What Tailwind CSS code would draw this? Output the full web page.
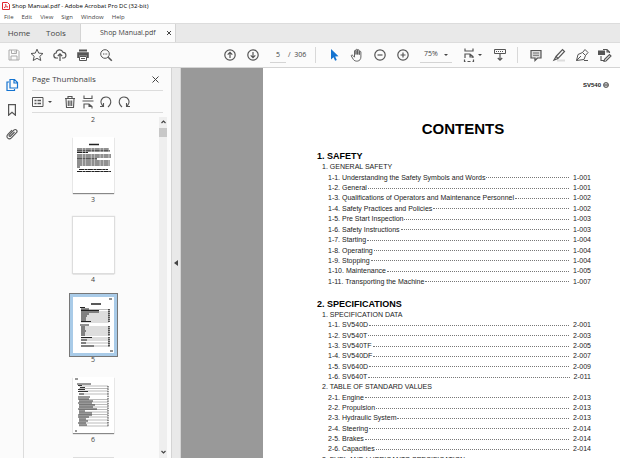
<!DOCTYPE html>
<html lang="en">
<head>
    <meta charset="UTF-8">
    <meta name="viewport" content="width=device-width, initial-scale=1.0">
    <title>Shop Manual.pdf - Adobe Acrobat Pro DC (32-bit)</title>
    <script src="https://cdn.jsdelivr.net/npm/@tailwindcss/browser@4"></script>
</head>
<body class="h-screen flex flex-col overflow-hidden bg-white font-['Open_Sans','Noto_Sans',sans-serif] text-[#444]">
    <!-- Title bar -->
    <header class="h-3 shrink-0 flex items-center gap-0.5 pl-0.5 text-[6px] text-black">
        <svg class="size-2" viewBox="0 0 8 8" fill="none" stroke="#e0282e"><path d="M.5.5h5l2 2v5h-7z"/><path d="M2 6c2-1 2-4 1.600-4S4 5 6 5C4 4.500 3 5 2 6z" stroke-width=".7"/></svg>
        <h1>Shop Manual.pdf - Adobe Acrobat Pro DC (32-bit)</h1>
    </header>
    <nav class="h-[11px] shrink-0 flex items-center gap-2 pl-1 text-[6px]">
        <button>File</button><button>Edit</button><button>View</button><button>Sign</button><button>Window</button><button>Help</button>
    </nav>

    <!-- Tabs -->
    <div class="h-5 shrink-0 flex bg-[#e9e9e9] border-y border-[#dcdcdc] text-[8px]">
        <button class="w-[38px]">Home</button>
        <button class="w-[36px]">Tools</button>
        <div class="ml-1.5 w-24 flex items-center justify-between pl-[19px] pr-1 bg-[#fbfbfb] border-x border-[#d4d4d4]">
            <span class="text-[7px]">Shop Manual.pdf</span>
            <button aria-label="Close tab"><svg class="size-1" viewBox="0 0 4 4" stroke="#444"><path d="M0 0l4 4M4 0L0 4"/></svg></button>
        </div>
    </div>

    <!-- Toolbar -->
    <div class="h-[25px] shrink-0 flex items-center bg-[#fbfbfb] border-b border-[#d4d4d4] pl-0.5 pr-1 text-[7px]">
        <button class="w-[23px] flex justify-center" aria-label="Save"><svg class="size-3.5" viewBox="0 0 14 14" fill="none" stroke="#aaa"><path d="M2 2h8.500L12 3.500V12H2zM4.500 2v3.500h5V2M4 12V8h6v4M8 3v1.500"/></svg></button>
        <button class="w-[23px] flex justify-center" aria-label="Star"><svg class="size-3.5" viewBox="0 0 14 14" fill="none" stroke="#555"><path d="M7 1.200l1.700 3.900 4.300.4-3.200 2.800 1 4.200L7 10.300l-3.800 2.200 1-4.200L1 5.500l4.300-.4z"/></svg></button>
        <button class="w-[23px] flex justify-center" aria-label="Upload"><svg class="size-3.5" viewBox="0 0 14 14" fill="none" stroke="#555"><path d="M5 10H3.500a2.500 2.500 0 0 1-.3-5C3.300 1.500 8.500.5 10 4.400c3.500-.2 4 5.300.7 5.600H9M7 13V6M4.800 8L7 5.800 9.200 8" stroke-width="1.200"/></svg></button>
        <button class="w-[23px] flex justify-center" aria-label="Print"><svg class="size-3.5" viewBox="0 0 14 14" fill="#555"><path d="M3 1.500h8v2H3zM1.200 4.300h11.600V10H11V7.700H3V10H1.200z"/><path d="M3.500 8.500h7v4h-7zM5 10.500h4" fill="#fff" stroke="#555"/></svg></button>
        <button class="w-[23px] flex justify-center" aria-label="Find"><svg class="size-3.5" viewBox="0 0 14 14" fill="none" stroke="#555"><circle cx="6" cy="6" r="4.300"/><path d="M9.200 9.200l3.600 3.500" stroke-width="1.600"/><path d="M4 6h1m.6 0h1m.6 0h1"/></svg></button>

        <button class="ml-auto w-[23px] flex justify-center" aria-label="Previous page"><svg class="size-3.5" viewBox="0 0 14 14" fill="none" stroke="#555" stroke-width="1.200"><circle cx="7" cy="7" r="5.200"/><path d="M7 10V4.500M4.700 6.600L7 4.300l2.300 2.300"/></svg></button>
        <button class="w-[23px] flex justify-center" aria-label="Next page"><svg class="size-3.5" viewBox="0 0 14 14" fill="none" stroke="#555" stroke-width="1.200"><circle cx="7" cy="7" r="5.200"/><path d="M7 4v5.500M4.700 7.400L7 9.700l2.300-2.300"/></svg></button>
        <input class="ml-1.5 w-4 h-4 text-center border-b border-[#d4d4d4]" value="5" aria-label="Page number">
        <span class="ml-0.5 w-[27px] whitespace-pre">/  306</span>
        <span class="h-4 w-px bg-[#d8d8d8]"></span>
        <button class="ml-1.5 w-[23px] flex justify-center" aria-label="Select"><svg class="size-3.5" viewBox="0 0 14 14" fill="#1473d0"><path d="M4 1v10.500l2.500-2.300 1.600 3.600 1.700-.8-1.600-3.500 3.300-.2z"/></svg></button>
        <button class="w-[23px] flex justify-center" aria-label="Pan"><svg class="size-3.5" viewBox="0 0 14 14" fill="none" stroke="#555" stroke-width=".9"><path d="M4.500 7.500V3c0-1 1.500-1 1.500 0v3.500V2c0-1 1.700-1 1.700 0v4.500V2.500c0-1 1.600-1 1.600 0v4.200V4c0-1 1.600-1 1.600 0v5c0 5-6 5-7.500 2.500L1.300 8C1 6.800 2.500 6.800 3 7.600l1.500 1.600V7"/></svg></button>
        <button class="w-[23px] flex justify-center" aria-label="Zoom out"><svg class="size-3.5" viewBox="0 0 14 14" fill="none" stroke="#555" stroke-width="1.200"><circle cx="7" cy="7" r="5.200"/><path d="M4.500 7h5"/></svg></button>
        <button class="w-[23px] flex justify-center" aria-label="Zoom in"><svg class="size-3.5" viewBox="0 0 14 14" fill="none" stroke="#555" stroke-width="1.200"><circle cx="7" cy="7" r="5.200"/><path d="M4.500 7h5M7 4.500v5"/></svg></button>
        <button class="ml-1.5 w-8 h-4 flex items-center justify-between px-1 border-b border-[#d4d4d4]">75%<svg class="w-1 h-0.5" viewBox="0 0 4 2" fill="#444"><path d="M0 0h4L2 2z"/></svg></button>
        <button class="ml-2.5 w-5 flex items-center justify-between" aria-label="Fit page"><svg class="size-3.5" viewBox="0 0 14 14" fill="none" stroke="#555" stroke-width="1.200"><path d="M3 .5V3h8V.5M3.500 13.500h-1v-2M3 10V6h5l3 2.500V10M11.500 11.500v2h-1M5.500 13.500h3M8 6v3h3"/></svg><svg class="w-1 h-0.5" viewBox="0 0 4 2" fill="#444"><path d="M0 0h4L2 2z"/></svg></button>
        <button class="ml-1.5 w-[23px] flex justify-center" aria-label="Scrolling"><svg class="size-3.5" viewBox="0 0 14 14" fill="none" stroke="#555"><path d="M1.500 1.500h11v4h-11z"/><path d="M3 3.500h8" stroke-dasharray="1 1"/><path d="M7 6v6M4.800 10L7 12.200 9.200 10" stroke-width="1.200"/></svg></button>
        <span class="ml-1.5 h-4 w-px bg-[#d8d8d8]"></span>
        <button class="ml-1.5 w-[23px] flex justify-center" aria-label="Comment"><svg class="size-3.5" viewBox="0 0 14 14" fill="#ddd" stroke="#555" stroke-width="1.200"><path d="M2 2.500h10V10H8.500L6 12.500V10H2z"/><path d="M4 5h6M4 7.300h6" stroke-width=".8"/></svg></button>
        <button class="w-[23px] flex justify-center" aria-label="Highlight"><svg class="size-3.5" viewBox="0 0 14 14" fill="none" stroke="#555" stroke-width="1.200"><path d="M5 12.500h8" stroke="#ddd" stroke-width="2"/><path d="M4 8.500L10.500 1.500l2 2L6 10.500zM4 8.500L2 12l4-1.500"/></svg></button>
        <button class="w-[23px] flex justify-center" aria-label="Sign"><svg class="size-3.5" viewBox="0 0 14 14" fill="none" stroke="#555"><path d="M1.500 12.500L3 6.500l4.500-2 3 3-1.500 4zM1.500 12.500L6 8M7.500 4.500l2.500-3 3 3-2.500 3M9 12.500h4"/></svg></button>
        <button class="w-[23px] flex justify-center" aria-label="Stamp"><svg class="size-3.5" viewBox="0 0 14 14" fill="none" stroke="#555" stroke-width="1.100"><path d="M3 8v4.500h3M5 1.500h4l2.500 2.500v1M9 1.500V4h2.500M6.500 11.500l5-5 1.500 1.500-5 5-2 .3z"/><path d="M.5 3h6v3.500h-6z" fill="#555"/></svg></button>
    </div>

    <main class="flex-1 min-h-0 flex">
        <!-- Navigation rail -->
        <aside class="w-6 shrink-0 flex flex-col items-center gap-3 pt-2.5 bg-[#fbfbfb] border-r border-[#dcdcdc]">
            <button aria-label="Page thumbnails"><svg class="size-3.5" viewBox="0 0 14 14" fill="none" stroke="#1473d0" stroke-width="1.200"><path d="M5 1.500h4.500l3 3V10H5zM9 1.500V5h3.500M4 4H2v8.500h7.500V11"/></svg></button>
            <button aria-label="Bookmarks"><svg class="w-3 h-3" viewBox="0 0 12 12" fill="none" stroke="#555" stroke-width="1.200"><path d="M2.600.6h6.800v10.600L6 8.200l-3.400 3z"/></svg></button>
            <button aria-label="Attachments"><svg class="w-3 h-3" viewBox="0 0 12 12" fill="none" stroke="#555" stroke-width="1.100"><path d="M8.500 4L4.600 8c-1 1-2.200-.2-1.200-1.200l4.400-4.600c2-1.800 4.400.5 2.600 2.500l-5 5.200c-2.600 2.500-6-.7-3.500-3.500L6 2.200"/></svg></button>
        </aside>

        <!-- Page thumbnails -->
        <section class="w-[147px] shrink-0 flex flex-col bg-[#fbfbfb] pl-2">
            <div class="mr-2 h-[23px] flex items-center justify-between pr-1 border-b border-[#dcdcdc]">
                <h2 class="text-[8px]">Page Thumbnails</h2>
                <button aria-label="Close panel"><svg class="size-[7px]" viewBox="0 0 7 7" stroke="#444"><path d="M.5.5l6 6M6.500.5l-6 6"/></svg></button>
            </div>
            <div class="mr-2 h-[22px] flex items-center gap-1 border-b border-[#dcdcdc]">
                <button class="w-[23px] flex items-center gap-1" aria-label="Options"><svg class="w-3 h-2.5" viewBox="0 0 12 10" fill="none" stroke="#555"><path d="M.5.5h10.500v9H.5z"/><path d="M2.500 3.500h2m1 0h3.500M2.500 6.500h2m1 0h3.500" stroke-width="1.400"/></svg><svg class="w-1 h-0.5" viewBox="0 0 4 2" fill="#444"><path d="M0 0h4L2 2z"/></svg></button>
                <button class="w-[18px] flex justify-end" aria-label="Delete"><svg class="size-3.5" viewBox="0 0 14 14" fill="none" stroke="#555" stroke-width="1.100"><path d="M2 3.500h10M5 3V1.500h4V3M3 4l.5 8.500h7L11 4M5.300 5.500v5.500M7 5.500v5.500M8.700 5.500v5.500"/></svg></button>
                <button aria-label="Insert"><svg class="size-3.5" viewBox="0 0 14 14" fill="none" stroke="#555" stroke-width="1.100"><path d="M3 .5v3h8v-3M1.500 6h11M3 13.500V9h5l3 2.500v2M8 9v2.500h3"/></svg></button>
                <button aria-label="Rotate left"><svg class="size-3.5" viewBox="0 0 14 14" fill="none" stroke="#555" stroke-width="1.100"><path d="M4 11C0 7 2.500 2 7 2s7 5.500 2 10M1 11.500h3.500V8"/></svg></button>
                <button aria-label="Rotate right"><svg class="size-3.5" viewBox="0 0 14 14" fill="none" stroke="#555" stroke-width="1.100"><path d="M10 11c4-4 1.500-9-3-9S0 7.500 5 12M13 11.500H9.500V8"/></svg></button>
            </div>
            <div class="flex-1 min-h-0 flex">
                <div class="flex-1 overflow-hidden flex flex-col items-center gap-2.5 pr-[5px] text-[7px] leading-[14px] text-center">
                    <span>2</span>
                    <figure><svg class="w-[41px] h-14 bg-white shadow-[0_1px_1px_#888]" viewBox="0 0 41 56" stroke="#222"><path d="M16 7.500h10" stroke-width="1.500"/><path d="M4 12h32M4 13.800h33M4 15.500h11M4 18h34M4 20h34M4 21.800h20M4 24h33M4 26h33M4 28h33M4 30h3M6 32.500h29M4 34.500h34" stroke-width="1.200" stroke-dasharray="5 .5 3 .4"/></svg><figcaption>3</figcaption></figure>
                    <figure><svg class="w-[41px] h-14 bg-white shadow-[0_0_1px_1px_#ddd,0_1px_1px_#888]" viewBox="0 0 41 56"></svg><figcaption>4</figcaption></figure>
                    <figure><svg class="w-[41px] h-14 bg-white outline-1 outline-offset-3 outline-[#777] shadow-[0_0_0_3px_#a9cbe8]" viewBox="0 0 41 56" stroke="#222"><path d="M18 7h10" stroke-width="1.500"/><path d="M36 2h3M37 54h3M7 10.500h5M7 28h9"/><path d="M8 12.500h28M8 15h28M8 17h28M8 19h28M8 21h28M8 23h28M8 25h28M8 30h28M8 32h28M8 34h28M8 36h28M8 38h28M8 41h28M8 43h28M8 46h28M8 49h28" stroke="#bbb"/><path d="M8 12h8M8 13.500h18M8 15h18M8 17h8M8 19h6M8 21h5M8 23h5M8 24.500h10M8 30h4M8 32h4M8 34h5M8 36h4M8 38h4M8 40.500h11M8 43h6M8 46h5M8 49h13"/><path d="M36 12v13M36 29v10M36 40v10" stroke-width="1.500" stroke-dasharray="1.500 .5"/></svg><figcaption>5</figcaption></figure>
                    <figure><svg class="w-[41px] h-14 bg-white shadow-[0_1px_1px_#888]" viewBox="0 0 41 56" stroke="#333"><path d="M2 2h3M2 54h2M4 7h14M5 20h12"/><path d="M6 9h29M6 11.500h29M6 14h29M6 17h29M6 22.500h29M6 25h29M6 27.500h29M6 30h29M6 32.500h29M6 35h29M6 37.500h29M6 40h29M6 43h29M6 46h29M6 49h29" stroke="#bbb"/><path d="M5 8.500h4M7 10.500h5M5 12.500h7M5 14.500h10M6 17h5M5 22h11M6 24h14M5 26h14M6 28h16M6 30h14M5 32h19M6 34h6M6 36h13M5 38h14M5 40h11M6 42h7M6 44h9M5 46h8M6 48h8"/><path d="M35 9v41" stroke-dasharray="1.500 .9"/></svg><figcaption>6</figcaption></figure>
                    <div class="w-[41px] h-14 shrink-0 bg-white border border-[#ddd]"></div>
                </div>
                <div class="w-2 mt-1 mr-1 bg-[#efefef] flex flex-col items-center justify-between pt-[3px] pb-1">
                    <svg class="w-[5px] h-1" viewBox="0 0 5 4" fill="none" stroke="#444" stroke-width="1.200"><path d="M.5 3l2-2 2 2"/></svg>
                    <span class="w-2 h-[9px] mt-1 mb-auto bg-[#c8c8c8]"></span>
                    <svg class="w-[5px] h-1" viewBox="0 0 5 4" fill="none" stroke="#444" stroke-width="1.200"><path d="M.5 1l2 2 2-2"/></svg>
                </div>
            </div>
        </section>
        <button class="w-2.5 shrink-0 flex items-center justify-center bg-[#e9e9e9] border-x border-[#d4d4d4]" aria-label="Collapse panel"><svg class="w-1 h-1.5" viewBox="0 0 4 6" fill="#444"><path d="M4 0v6L0 3z"/></svg></button>

        <!-- Document -->
        <div class="w-[82px] shrink-0 bg-[#999]"></div>
        <article class="flex-1 min-w-0 overflow-hidden bg-white pt-3 pl-[54px] pr-[11px] font-['Liberation_Sans',Arial,sans-serif] text-[#222]">
            <div class="flex items-center justify-end gap-0.5 h-2.5 text-[6px] font-bold">SV540 <svg class="size-1.5" viewBox="0 0 6 6" fill="none" stroke="#333" stroke-width=".8"><circle cx="3" cy="3" r="2.500"/><path d="M1 2.200h4M1 3.800h4"/></svg></div>
            <h1 class="mt-[27px] text-center text-[15px] leading-6 font-bold text-black">CONTENTS</h1>
            <div id="toc" class="mt-2.5 mr-[18px] flex flex-col gap-3"></div>
        </article>
    </main>

    <script>
        // Headings have no page number
        var contents = [
            { title: '1. SAFETY', height: 'h-[125px]', rows: [
                ['1. GENERAL SAFETY'],
                ['1-1. Understanding the Safety Symbols and Words', '1-001'],
                ['1-2. General', '1-001'],
                ['1-3. Qualifications of Operators and Maintenance Personnel', '1-002'],
                ['1-4. Safety Practices and Policies', '1-002'],
                ['1-5. Pre Start Inspection', '1-003'],
                ['1-6. Safety Instructions', '1-003'],
                ['1-7. Starting', '1-004'],
                ['1-8. Operating', '1-004'],
                ['1-9. Stopping', '1-004'],
                ['1-10. Maintenance', '1-005'],
                ['1-11. Transporting the Machine', '1-007']
            ] },
            { title: '2. SPECIFICATIONS', height: 'h-[155px]', rows: [
                ['1. SPECIFICATION DATA'],
                ['1-1. SV540D', '2-001'],
                ['1-2. SV540T', '2-003'],
                ['1-3. SV540TF', '2-005'],
                ['1-4. SV540DF', '2-007'],
                ['1-5. SV640D', '2-009'],
                ['1-6. SV640T', '2-011'],
                ['2. TABLE OF STANDARD VALUES'],
                ['2-1. Engine', '2-013'],
                ['2-2. Propulsion', '2-013'],
                ['2-3. Hydraulic System', '2-013'],
                ['2-4. Steering', '2-014'],
                ['2-5. Brakes', '2-014'],
                ['2-6. Capacities', '2-014'],
                ['3. FUEL AND LUBRICANTS SPECIFICATION']
            ] }
        ];

        function tocRow(row) {
            if (!row[1]) {
                return '<li class="flex items-center pl-[5px] whitespace-nowrap">' + row[0] + '</li>';
            }
            return '<li class="flex items-center pl-[11px] whitespace-nowrap">' + row[0] +
                '<span class="flex-1 ml-px mr-1 border-t border-dotted border-[#777]"></span>' +
                '<span>' + row[1] + '</span></li>';
        }

        document.getElementById('toc').innerHTML = contents.map(section =>
            '<section><h2 class="text-[9px] leading-[11px] font-bold text-black">' + section.title + '</h2>' +
            '<ul class="grid auto-rows-fr text-[7px] leading-[10px] ' + section.height + '">' +
            section.rows.map(tocRow).join('') + '</ul></section>'
        ).join('');
    </script>
</body>
</html>
